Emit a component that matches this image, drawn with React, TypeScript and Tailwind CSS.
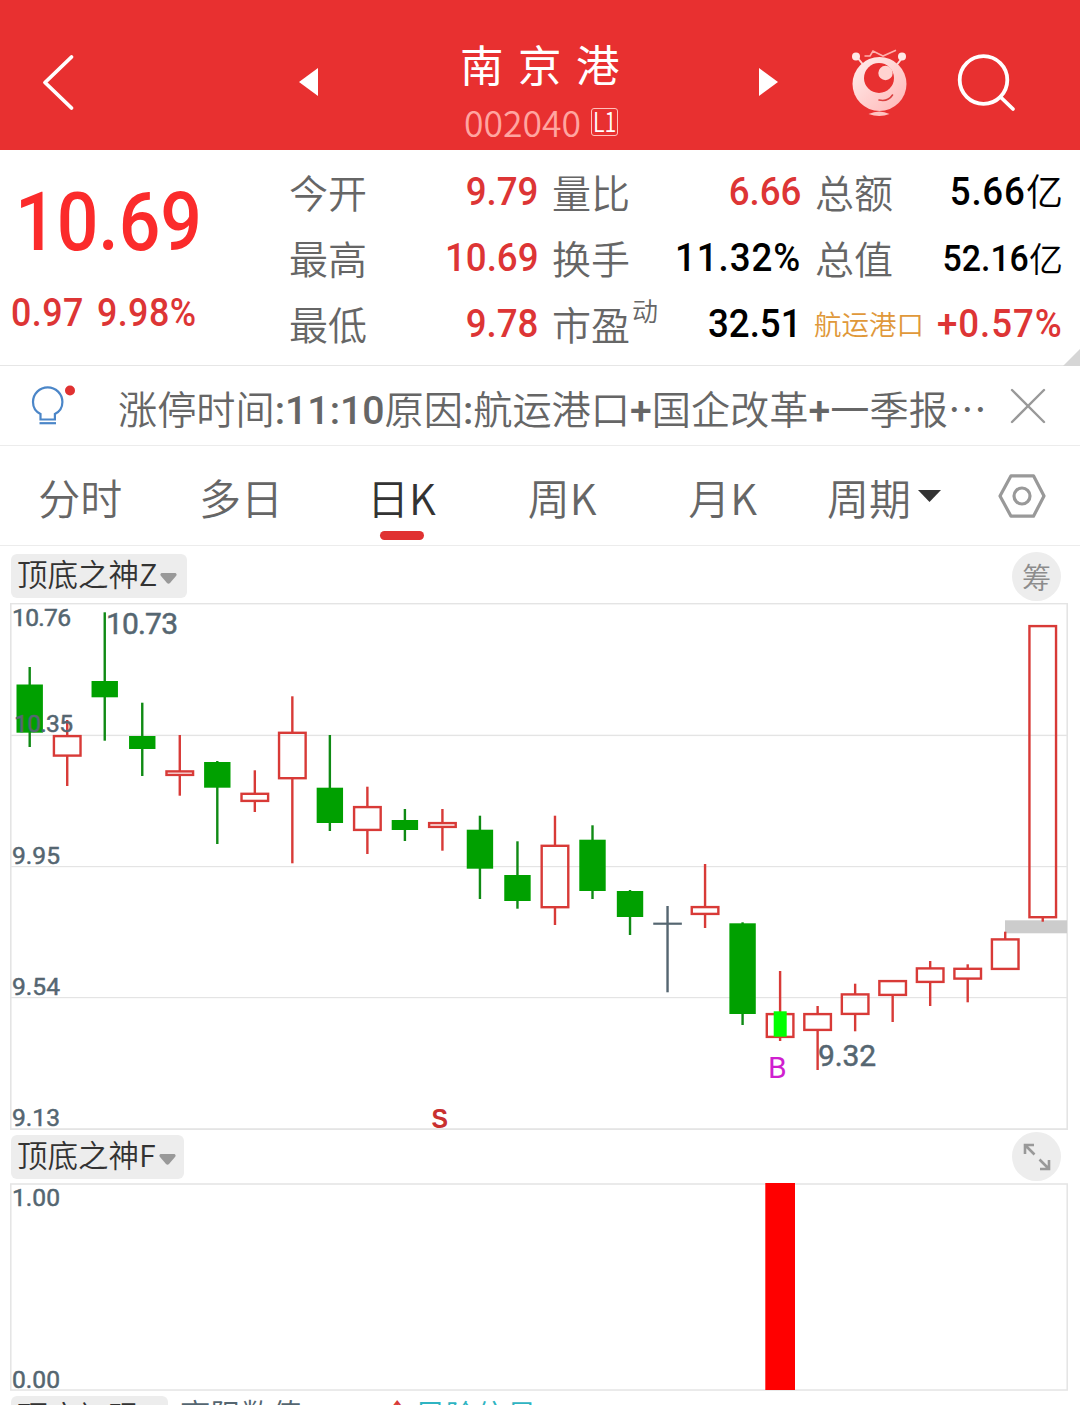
import React from 'react';
import clsx from 'clsx';

type Tone = 'up' | 'down' | 'flat';

// x is derived from the index; values are [tone, high, low, bodyTop, bodyBottom]
const candles: [Tone, number, number, number, number][] = [
  ['down', 667, 747, 684.5, 732.7],
  ['up', 720, 786, 735, 756.7],
  ['down', 612.3, 740.7, 681, 697.3],
  ['down', 702.7, 776, 736, 749],
  ['up', 735, 795.7, 770.3, 776],
  ['down', 761, 844, 762, 787.7],
  ['up', 770.3, 812, 792.7, 802],
  ['up', 696.3, 863.3, 731.7, 779.3],
  ['down', 735, 831, 787.7, 823],
  ['up', 786.7, 854, 806, 831],
  ['down', 809, 841, 820, 830],
  ['up', 809, 850.7, 822, 828],
  ['down', 815.7, 899, 829.7, 868.7],
  ['down', 841.3, 908.7, 875, 901],
  ['up', 815.7, 925, 844.7, 908.3],
  ['down', 825.3, 899, 839.7, 891],
  ['down', 890, 935, 891, 917],
  ['flat', 906, 992.3, 922.6, 924.8],
  ['up', 864, 928, 906, 915],
  ['down', 922.3, 1025, 923.3, 1014],
  ['up', 971, 1041, 1013, 1038],
  ['up', 1006, 1070, 1013, 1031],
  ['up', 983.7, 1031.3, 993.3, 1015],
  ['up', 980, 1022, 980, 996],
  ['up', 961, 1006, 967.3, 983],
  ['up', 964.3, 1002.3, 967.7, 979.7],
  ['up', 931.7, 970, 938.3, 970],
  ['up', 625, 921.7, 625, 918.3],
];

const tabs = ['分时', '多日', '日K', '周K', '月K'];

const columns = [
  [
    { label: '今开', value: '9.79', up: true },
    { label: '最高', value: '10.69', up: true },
    { label: '最低', value: '9.78', up: true },
  ],
  [
    { label: '量比', value: '6.66', up: true },
    { label: '换手', value: '11.32%' },
    { label: '市盈', sup: '动', value: '32.51' },
  ],
];

function Num({ children, className }: { children: React.ReactNode; className?: string }) {
  return (
    <span className={clsx("inline-block font-['Roboto',sans-serif] font-medium leading-none whitespace-nowrap", className)}>
      {children}
    </span>
  );
}

function Candle({ index, data }: { index: number; data: (typeof candles)[number] }) {
  const [tone, high, low, top, bottom] = data;
  const x = 29.7 + index * 37.52;

  if (tone === 'down') {
    return (
      <g fill="#00a000">
        <rect x={x - 1.2} y={high} width={2.4} height={low - high} fill="#0f8a14" />
        <rect x={x - 13.2} y={top} width={26.4} height={bottom - top} />
      </g>
    );
  }

  if (tone === 'flat') {
    return (
      <g fill="#556671">
        <rect x={x - 1.2} y={high} width={2.4} height={low - high} />
        <rect x={x - 14.3} y={top} width={28.6} height={bottom - top} />
      </g>
    );
  }

  return (
    <g fill="#d83a37">
      <rect x={x - 1.2} y={high} width={2.4} height={top - high + 1} />
      <rect x={x - 1.2} y={bottom - 1} width={2.4} height={Math.max(low - bottom + 1, 0)} />
      <rect x={x - 13.3} y={top + 1.1} width={26.6} height={bottom - top - 2.2} fill="none" stroke="#d83a37" strokeWidth={2.4} />
    </g>
  );
}

function AxisLabel({ x, y, width, size = 24.6, children }: { x: number; y: number; width: number; size?: number; children: string }) {
  return (
    <text
      x={x}
      y={y}
      fontSize={size}
      textLength={width}
      fill="#556671"
      stroke="#556671"
      strokeWidth={0.5}
      className="font-['Roboto',sans-serif] font-normal"
    >
      {children}
    </text>
  );
}

function IndicatorChip({ name, className }: { name: string; className?: string }) {
  return (
    <div className={clsx('flex h-11 shrink-0 items-center rounded-md bg-[#ededed] pl-[6px] text-[30.5px] leading-none text-[#333]', className)}>
      <span className="-mt-[5px] whitespace-nowrap">{name}</span>
      <svg width="17" height="11" viewBox="0 0 17 11" className="mt-[5px] ml-[3px] shrink-0">
        <path d="M1.5 0h14q2 1 .5 3L10 10q-1.500 1.500-3 0L1 3Q-.5 1 1.500 0z" fill="#999" />
      </svg>
    </div>
  );
}

function Header() {
  return (
    <header className="flex h-[150px] items-start bg-[#e83030] text-white">
      <svg width="34" height="60" viewBox="0 0 34 60" className="mt-[52px] ml-[41px]" fill="none" stroke="white" strokeWidth="3.800" strokeLinecap="round" strokeLinejoin="round">
        <path d="M30.500 5 4 30.500 30.500 56" />
      </svg>
      <svg width="19" height="28" viewBox="0 0 19 28" className="mt-[68px] ml-[224px]" fill="white">
        <path d="M0 14 19 0v28z" />
      </svg>
      <div className="flex w-[441px] flex-col items-center">
        <h1 className="mt-[41px] ml-[17px] text-[43.500px] leading-[46px] font-normal tracking-[14.500px]">南京港</h1>
        <div className="mt-[18px] ml-[5px] flex items-center">
          <span className="w-[118px] text-[35.500px] leading-[34px] whitespace-nowrap text-[#ffa5a0]">002040</span>
          <span className="ml-[9px] flex h-7 w-[27px] items-center justify-center rounded-[3px] border border-[#ffc0bc]">
            <span className="-mt-[3px] inline-block scale-x-[.8] text-[27px] leading-none">L1</span>
          </span>
        </div>
      </div>
      <svg width="19" height="28" viewBox="0 0 19 28" className="mt-[68px]" fill="white">
        <path d="M19 14 0 0v28z" />
      </svg>
      <svg width="58" height="70" viewBox="0 0 58 70" className="mt-[49px] ml-[73px]">
        <defs>
          <linearGradient id="robot" x1="0" y1="0" x2="1" y2="1">
            <stop offset="0" stopColor="#fff0ee" />
            <stop offset="1" stopColor="#ffb5b5" />
          </linearGradient>
        </defs>
        <path d="M6 8 14 18M52 8 44 18" stroke="#ffd9d6" strokeWidth="2" />
        <circle cx="5" cy="7.500" r="4" fill="#ffe9e7" />
        <circle cx="51" cy="7.500" r="4" fill="#ffe9e7" />
        <path d="M13.500 7H19l3-5 10 5L45 1.300" fill="none" stroke="#ffb0ac" strokeWidth="1.600" />
        <circle cx="28.500" cy="35" r="27" fill="url(#robot)" />
        <circle cx="28" cy="29" r="15" fill="#e83030" />
        <circle cx="34.500" cy="24" r="7.200" fill="#ffd3d0" />
        <path d="M28 51q9 2 13.500-5" fill="none" stroke="#d9403f" strokeWidth="1.600" strokeLinecap="round" />
        <path d="M17.500 65q11-5 21 0-10 4-21 0z" fill="#ffc4c2" />
      </svg>
      <svg width="60" height="60" viewBox="0 0 60 60" className="mt-[53px] ml-[48px]" fill="none" stroke="white" strokeWidth="3.800" strokeLinecap="round">
        <circle cx="26.500" cy="27" r="23.800" />
        <path d="M43.500 44 56 56" />
      </svg>
    </header>
  );
}

function Quote() {
  return (
    <section className="relative flex h-[216px] border-b border-[#e6e6e6] pt-[9px]">
      <div className="flex w-[289px] shrink-0 flex-col items-start">
        <Num className="mt-[23px] ml-[15px] origin-left scale-x-[.905] text-[81px] text-[#fb2b2b]">10.69</Num>
        <Num className="mt-[31px] ml-[11px] origin-left scale-x-[.93] text-[38.500px] tracking-[.5px] text-[#dd3535]">
          0.97<span className="ml-[14px]">9.98%</span>
        </Num>
      </div>
      {columns.map((rows, i) => (
        <div key={i} className="mr-[14px] w-[249px] shrink-0">
          {rows.map((row) => (
            <div key={row.label} className="flex h-[66px] items-center justify-between">
              <span className="-mt-px text-[39px] leading-none whitespace-nowrap text-[#666]">
                {row.label}
                {row.sup && <sup className="relative -top-[19px] ml-[2px] align-baseline text-[26px] leading-none">{row.sup}</sup>}
              </span>
              <Num
                className={clsx(
                  'origin-right scale-x-[.94] text-[39px]',
                  row.up ? 'text-[#dd3535]' : 'text-black',
                  row.value.endsWith('%') && 'tracking-[1px]',
                )}
              >
                {row.value}
              </Num>
            </div>
          ))}
        </div>
      ))}
      <div className="w-[248px] shrink-0">
        <div className="flex h-[66px] items-center">
          <span className="-mt-px mr-auto text-[39px] leading-none text-[#666]">总额</span>
          <Num className="origin-right scale-x-[.94] text-[39px] tracking-[.8px]">5.66</Num>
          <span className="-mt-[3px] text-[37px] leading-none">亿</span>
        </div>
        <div className="flex h-[66px] items-center">
          <span className="-mt-px mr-auto text-[39px] leading-none text-[#666]">总值</span>
          <Num className="origin-right scale-x-[.94] pt-[2px] text-[36px]">52.16</Num>
          <span className="text-[34px] leading-none">亿</span>
        </div>
        <div className="flex h-[66px] items-center">
          <span className="-ml-px mr-auto text-[27.500px] leading-none whitespace-nowrap text-[#e0983a]">航运港口</span>
          <Num className="-ml-6 origin-right scale-x-[.94] text-[39px] tracking-[1px] text-[#dd3535]">+0.57%</Num>
        </div>
      </div>
      <svg width="17" height="17" viewBox="0 0 17 17" className="absolute right-0 -bottom-px">
        <path d="M17 0v17H0z" fill="#d6d6d6" />
      </svg>
    </section>
  );
}

function Notice() {
  return (
    <section className="flex h-[80px] items-center border-b border-[#ececec]">
      <svg width="46" height="46" viewBox="0 0 46 46" className="mt-[2px] ml-[31px] shrink-0" fill="none" stroke="#4b86c8" strokeWidth="2.200">
        <path d="M9.500 35.500v-5.500C4.500 27.500 2 23 2 18a14.700 14.700 0 0 1 29.400 0c0 5-2.500 9.500-7.500 12v5.500z" />
        <path d="M8.500 39.200h16.500" />
        <circle cx="39" cy="6.500" r="5" fill="#e03131" stroke="none" />
      </svg>
      <p className="mt-[8px] ml-[41px] w-[872px] text-[39.200px] leading-none whitespace-nowrap text-[#666]">
        涨停时间<Num>:11:10</Num>原因<Num>:</Num>航运港口<Num>+</Num>国企改革<Num>+</Num>一季报…
      </p>
      <svg width="36" height="36" viewBox="0 0 36 36" className="mt-px ml-[20px] shrink-0" stroke="#999" strokeWidth="2.400" strokeLinecap="round">
        <path d="M2 2 34 34M34 2 2 34" />
      </svg>
    </section>
  );
}

function TabBar() {
  return (
    <nav className="flex h-[100px] items-center border-b border-[#ececec] text-[42px] leading-none text-[#666]">
      {tabs.map((tab) => {
        const active = tab === '日K';
        return (
          <div key={tab} className={clsx('relative flex h-full w-[160.600px] items-center justify-center', active && 'text-[#333]')}>
            <span className="pt-[2px]">{tab}</span>
            {active && <span className="absolute bottom-[5px] left-[59px] h-[9px] w-11 rounded-full bg-[#e03131]" />}
          </div>
        );
      })}
      <div className="flex w-[162px] items-center justify-center gap-[7px]">
        <span className="pt-[2px]">周期</span>
        <svg width="23" height="12" viewBox="0 0 23 12">
          <path d="M0 0h23L11.500 12z" fill="#333" />
        </svg>
      </div>
      <svg width="48" height="44" viewBox="0 0 48 44" className="ml-[33px]" fill="none" stroke="#999" strokeWidth="3.200" strokeLinejoin="round">
        <path d="M13 1.800h22.500L46 22 35.500 42.200H13L2 22z" />
        <circle cx="24" cy="22" r="8" />
      </svg>
    </nav>
  );
}

function CandleChart() {
  return (
    <svg width="1080" height="528" viewBox="0 603 1080 528" className="block">
      <g fill="#e4e4e4">
        <rect x="10" y="603" width="1058" height="1.400" />
        <rect x="10" y="734.700" width="1058" height="1.400" />
        <rect x="10" y="866" width="1058" height="1.200" />
        <rect x="10" y="997" width="1058" height="1.200" />
        <rect x="10" y="1128.200" width="1058" height="1.800" />
        <rect x="10" y="603" width="1.600" height="527" />
        <rect x="1066.400" y="603" width="1.600" height="527" />
      </g>
      <rect x="1005" y="920.300" width="62" height="13" fill="#ccc" />
      {candles.map((data, i) => (
        <Candle key={i} index={i} data={data} />
      ))}
      <rect x="773.700" y="1011.300" width="13" height="25.400" fill="#0f0" />
      <AxisLabel x={12} y={626} width={59}>10.76</AxisLabel>
      <AxisLabel x={14} y={731.5} width={59}>10.35</AxisLabel>
      <AxisLabel x={12} y={863.5} width={48}>9.95</AxisLabel>
      <AxisLabel x={12} y={994.5} width={48}>9.54</AxisLabel>
      <AxisLabel x={12} y={1125.5} width={48}>9.13</AxisLabel>
      <AxisLabel x={106} y={634} width={72} size={30}>10.73</AxisLabel>
      <AxisLabel x={818} y={1066} width={58} size={30}>9.32</AxisLabel>
      <text x="768" y="1078" fontSize="30" fill="#cf1fcf" className="font-['Roboto',sans-serif] font-normal">B</text>
      <text x="431.500" y="1127.500" fontSize="27" textLength="16.500" lengthAdjust="spacingAndGlyphs" fill="#c93030" className="font-['Liberation_Sans',sans-serif] font-bold">S</text>
    </svg>
  );
}

function SignalChart() {
  return (
    <svg width="1080" height="209" viewBox="0 1183 1080 209" className="block">
      <rect x="10.800" y="1184" width="1056.400" height="206" fill="none" stroke="#e4e4e4" strokeWidth="1.500" />
      <rect x="765.300" y="1183" width="29.700" height="207" fill="#f00" />
      <AxisLabel x={12} y={1206} width={48}>1.00</AxisLabel>
      <AxisLabel x={12} y={1387.5} width={48}>0.00</AxisLabel>
    </svg>
  );
}

export default function App() {
  return (
    <div lang="zh-CN" className="h-[1405px] w-[1080px] overflow-hidden bg-white font-['Noto_Sans_CJK_SC',sans-serif] font-[350] text-black">
      <Header />
      <Quote />
      <Notice />
      <TabBar />
      <div className="flex h-[57px] items-center justify-between pt-[3px] pr-[19px] pl-[11px]">
        <IndicatorChip name="顶底之神Z" className="w-44" />
        <span className="flex size-[49px] items-center justify-center rounded-full bg-[#ededed] text-[29px] leading-none text-[#8c8c8c]">筹</span>
      </div>
      <CandleChart />
      <div className="flex h-[52px] items-center justify-between pr-[19px] pb-px pl-[11px]">
        <IndicatorChip name="顶底之神F" className="w-[173px]" />
        <span className="flex size-[49px] items-center justify-center rounded-full bg-[#ededed]">
          <svg width="28" height="28" viewBox="0 0 28 28" fill="none" stroke="#999" strokeWidth="2.600">
            <path d="M2 11V2h9M2 2l9.500 9.500M26 17v9h-9M26 26l-9.500-9.500" />
          </svg>
        </span>
      </div>
      <SignalChart />
      <div className="flex items-start pt-[4px] pl-[11px] text-[30.500px] leading-none">
        <IndicatorChip name="顶底初现" className="w-[157px]" />
        <span className="ml-[12px] pt-[2px] whitespace-nowrap text-[#556671]">高阻数值</span>
        <span className="ml-[80px] w-[33px] pt-[2px] text-[#d83a37]">↑</span>
        <span className="pt-[3px] whitespace-nowrap text-[#2fb4c2]">
          风险信号<span className="ml-[14px]">0.00</span>
        </span>
      </div>
    </div>
  );
}
